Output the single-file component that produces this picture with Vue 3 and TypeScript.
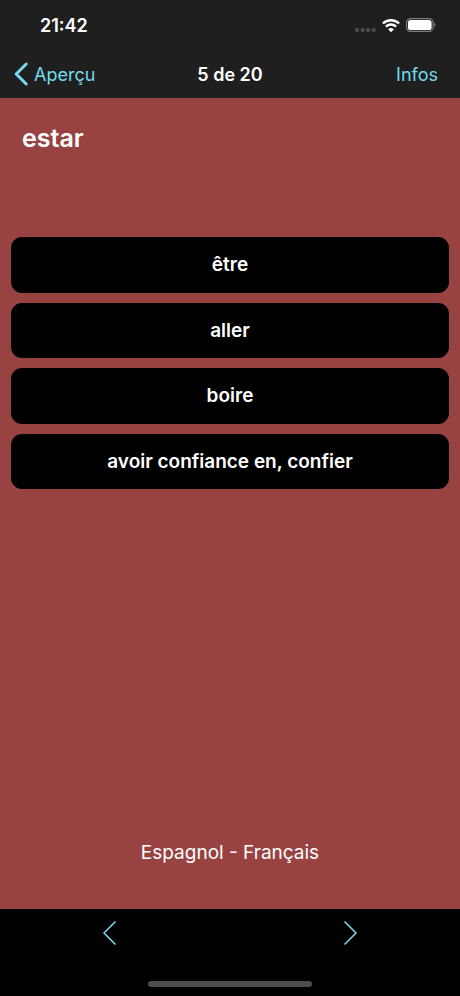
<script setup lang="ts">
import { ref } from 'vue'

const word = 'estar'
const answers: string[] = ['être', 'aller', 'boire', 'avoir confiance en, confier']
const position = ref(5)
const total = 20

function step(delta: number): void {
  position.value = Math.min(total, Math.max(1, position.value + delta))
}
</script>

<template>
  <div class="screen">
    <header class="top">
      <div class="status">
        <time class="clock">21:42</time>
        <div class="indicators">
          <svg class="cell" viewBox="0 0 21 4" aria-hidden="true">
            <rect x="0" y="0" width="4" height="4" rx="1.4" />
            <rect x="5.6" y="0" width="4" height="4" rx="1.4" />
            <rect x="11.2" y="0" width="4" height="4" rx="1.4" />
            <rect x="16.8" y="0" width="4" height="4" rx="1.4" />
          </svg>
          <svg class="wifi" viewBox="0 0 18 13" aria-hidden="true">
            <path d="M0.9 4.5a11.6 11.6 0 0 1 16.200 0" />
            <path d="M3.900 7.600a7.300 7.300 0 0 1 10.200 0" />
            <path class="dot" d="M9 13.200 6.200 10.400a4 4 0 0 1 5.600 0Z" />
          </svg>
          <svg class="battery" viewBox="0 0 30 14" aria-hidden="true">
            <rect class="shell" x="0.6" y="0.6" width="26.4" height="12.8" rx="3.8" />
            <rect class="level" x="2" y="2" width="23.6" height="10" rx="2.6" />
            <path class="tip" d="M28.2 4.8c1.8.7 1.8 3.7 0 4.4Z" />
          </svg>
        </div>
      </div>
      <nav class="bar">
        <a class="back" href="#apercu">
          <svg viewBox="0 0 14 24" aria-hidden="true"><path d="M12.2 2 2.2 12l10 10" /></svg>
          <span>Aperçu</span>
        </a>
        <h1 class="count">{{ position }} de {{ total }}</h1>
        <a class="infos" href="#infos">Infos</a>
      </nav>
    </header>

    <main class="card">
      <h2 class="word">{{ word }}</h2>
      <div class="answers">
        <button v-for="answer in answers" :key="answer" type="button" class="answer">
          {{ answer }}
        </button>
      </div>
      <p class="languages">Espagnol - Français</p>
    </main>

    <footer class="bottom">
      <div class="pager">
        <button type="button" aria-label="Précédent" @click="step(-1)">
          <svg viewBox="0 0 14 24" aria-hidden="true"><path d="M12.500 0.500 1 12l11.500 11.500" /></svg>
        </button>
        <button type="button" aria-label="Suivant" @click="step(1)">
          <svg viewBox="0 0 14 24" aria-hidden="true"><path d="M1.500 0.500 13 12 1.500 23.500" /></svg>
        </button>
      </div>
      <div class="home"></div>
    </footer>
  </div>
</template>

<style>
body {
  margin: 0;
  background: #000;
}
</style>

<style scoped>
.screen {
  display: flex;
  flex-direction: column;
  min-height: 100vh;
  font-family: Inter, 'Liberation Sans', sans-serif;
  font-size: 18px;
  color: #fff;
  background: #000;
}

.top {
  background: #1f1f1f;
}

.status {
  display: flex;
  align-items: center;
  justify-content: space-between;
  height: 50px;
  padding: 0 24px 0 40px;
}

.clock {
  font-weight: 600;
}

.indicators {
  display: flex;
  align-items: center;
  gap: 6px;
}

.cell {
  width: 21px;
  height: 4px;
  margin-top: 10px;
  fill: #4b4b4b;
}

.wifi {
  width: 18px;
  height: 13px;
  overflow: visible;
  fill: none;
  stroke: #fff;
  stroke-width: 2.4;
}

.wifi .dot {
  fill: #fff;
  stroke: none;
}

.battery {
  width: 30px;
  height: 14px;
}

.shell {
  fill: none;
  stroke: #7b7b7b;
  stroke-width: 1.2;
}

.level {
  fill: #fff;
}

.tip {
  fill: #7b7b7b;
}

.bar {
  display: grid;
  grid-template-columns: 1fr auto 1fr;
  align-items: center;
  height: 48px;
  padding: 0 14px;
}

.back,
.infos {
  color: #74dbee;
  text-decoration: none;
}

.back {
  display: flex;
  align-items: center;
  gap: 6px;
}

.back svg {
  width: 14px;
  height: 24px;
  fill: none;
  stroke: currentColor;
  stroke-width: 3;
  stroke-linecap: round;
  stroke-linejoin: round;
}

.infos {
  justify-self: end;
  padding-right: 8px;
}

.count {
  margin: 0;
  font-size: 18px;
  font-weight: 600;
}

.card {
  display: flex;
  flex: 1;
  flex-direction: column;
  padding: 24px 11px 40px;
  background: #984342;
}

.word {
  min-height: 115px;
  margin: 0;
  padding-left: 11px;
  font-size: 25px;
  font-weight: 600;
  line-height: 32px;
  box-sizing: border-box;
}

.answers {
  display: grid;
  grid-auto-rows: 1fr;
  gap: 10px;
  min-height: 252px;
}

.answer {
  padding: 12px;
  border: 0;
  border-radius: 11px;
  font: inherit;
  font-size: 19px;
  font-weight: 600;
  color: #fff;
  background: #000;
}

.languages {
  margin: auto 0 0;
  font-size: 19px;
  line-height: 32px;
  text-align: center;
}

.bottom {
  display: flex;
  flex-direction: column;
  align-items: center;
  justify-content: space-between;
  height: 87px;
  padding-bottom: 9px;
  box-sizing: border-box;
}

.pager {
  display: flex;
  justify-content: space-between;
  align-self: stretch;
  padding: 0 92px;
}

.pager button {
  display: grid;
  place-items: center;
  width: 36px;
  height: 48px;
  padding: 0;
  border: 0;
  color: #74dbee;
  background: none;
}

.pager svg {
  width: 14px;
  height: 24px;
  overflow: visible;
  fill: none;
  stroke: currentColor;
  stroke-width: 1.5;
}

.home {
  width: 164px;
  height: 6px;
  border-radius: 3px;
  background: #4d4d4d;
}
</style>
